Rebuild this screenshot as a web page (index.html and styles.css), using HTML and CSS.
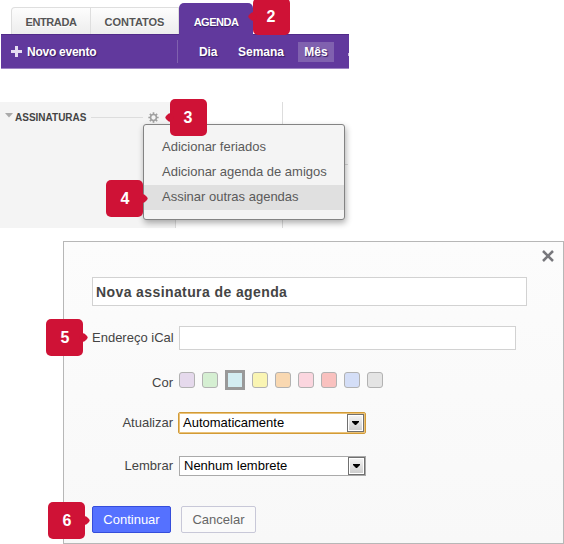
FILE: index.html
```html
<!DOCTYPE html>
<html lang="pt-BR">
<head>
<meta charset="utf-8">
<title>Agenda</title>
<link rel="stylesheet" href="styles.css">
</head>
<body>
<header class="top">
  <nav class="tabs">
    <a class="tab"><span class="t-entrada">ENTRADA</span></a>
    <a class="tab contacts"><span class="t-contatos">CONTATOS</span></a>
    <a class="tab active"><span class="t-agenda">AGENDA</span></a>
  </nav>
  <div class="bar">
    <div class="new">
      <svg width="11" height="12" viewBox="0 0 11 12"><path d="M4 0h3v4h4v3H7v4H4V7H0V4h4z" fill="#e5dcf1"/></svg>
      <span class="t-novo">Novo evento</span>
    </div>
    <div class="views"><span class="dia">Dia</span><span class="semana">Semana</span><span class="month">Mês</span><i class="cut"></i></div>
  </div>
  <b class="badge left b2">2</b>
</header>

<section class="calendar">
  <aside class="side">
    <div class="side-head">
      <svg width="8" height="5" viewBox="0 0 8 5"><path d="M0 0h8L4 4.5z" fill="#aaa"/></svg>
      <span class="t-assin">ASSINATURAS</span>
      <i class="rule"></i>
      <svg class="gear" width="11" height="11" viewBox="0 0 12 12"><circle cx="6" cy="6" r="3.2" fill="none" stroke="#a0a0a0" stroke-width="1.7"/><path d="M6 .4v2M6 9.6v2M.4 6h2M9.6 6h2M2 2l1.4 1.4M8.6 8.6L10 10M10 2L8.6 3.4M3.4 8.6L2 10" stroke="#a0a0a0" stroke-width="1.8"/></svg>
    </div>
  </aside>
  <div class="cell"></div>
  <div class="cell last"><i></i></div>
  <div class="menu">
    <div class="item"><span>Adicionar feriados</span></div>
    <div class="item"><span>Adicionar agenda de amigos</span></div>
    <div class="item selected"><span>Assinar outras agendas</span></div>
  </div>
  <b class="badge left b3">3</b>
  <b class="badge right b4">4</b>
</section>

<section class="dialog">
  <svg class="close" width="12" height="12" viewBox="0 0 12 12"><path d="M1 1l10 10M11 1L1 11" stroke="#77777c" stroke-width="2.5"/></svg>
  <div class="title"><span class="t-title">Nova assinatura de agenda</span></div>
  <div class="row ical"><label>Endereço iCal</label><div class="field"></div></div>
  <div class="row colors"><label>Cor</label>
    <div class="swatches"><i class="lilac"></i><i class="green"></i><i class="aqua"></i><i class="yellow"></i><i class="orange"></i><i class="pink"></i><i class="red"></i><i class="blue"></i><i class="gray"></i></div>
  </div>
  <div class="row update"><label>Atualizar</label>
    <div class="select focus"><span>Automaticamente</span><i class="drop"><svg width="7" height="4" viewBox="0 0 7 4"><path d="M0 0h7v1L4 4H3L0 1z"/></svg></i></div>
  </div>
  <div class="row remind"><label>Lembrar</label>
    <div class="select"><span>Nenhum lembrete</span><i class="drop"><svg width="7" height="4" viewBox="0 0 7 4"><path d="M0 0h7v1L4 4H3L0 1z"/></svg></i></div>
  </div>
  <div class="actions"><div class="button primary"><span>Continuar</span></div><div class="button"><span>Cancelar</span></div></div>
  <b class="badge right b5">5</b>
  <b class="badge right b6">6</b>
</section>
</body>
</html>
```

FILE: styles.css
```css
* { box-sizing: border-box; }
body { margin: 0; width: 564px; height: 544px; overflow: hidden; background: #fff; font: 13px/16px "Liberation Sans", Arial, sans-serif; color: #444; }
svg { display: block; flex: none; }
span, label { white-space: nowrap; }

.top { position: relative; width: 349px; height: 102px; padding: 3px 0 0 1px; }
.tabs { display: flex; align-items: flex-end; height: 31px; padding-left: 10px; }
.tab { display: flex; align-items: center; justify-content: center; width: 80px; height: 27px; padding-top: 2px; border: 1px solid #dedede; border-bottom: 0; border-radius: 4px 0 0 0; background: linear-gradient(#fdfdfd, #ededed); font-size: 11px; font-weight: bold; color: #555; text-shadow: 0 1px #fff; }
.contacts { width: 88px; border-left: 0; border-radius: 0; }
.active { position: relative; width: 74px; height: 32px; margin-bottom: -1px; padding-top: 6px; border: 0; border-radius: 5px 5px 0 0; background: #61399d; color: #fff; text-shadow: 0 1px 1px #351b62; }
.t-entrada { letter-spacing: -.4px; }
.t-agenda { letter-spacing: -.5px; }
.bar { display: flex; height: 35px; background: #61399d; border-top: 1px solid #512b89; border-bottom: 1px solid #9e84c4; color: #fff; font-weight: bold; font-size: 12px; text-shadow: 1px 1px 1px #351b62; }
.new { display: flex; align-items: center; gap: 5px; width: 176px; padding-left: 10px; }
.t-novo { letter-spacing: -.25px; }
.views { display: flex; align-items: center; flex: 1; height: 23px; margin-top: 5px; border-left: 1px solid #8061af; padding-left: 21px; }
.dia { width: 39px; letter-spacing: -.1px; }
.semana { width: 60px; }
.month { width: 36px; height: 20px; line-height: 20px; background: #8061af; text-align: center; }
.cut { width: 1px; height: 3px; margin: 6px 0 0 auto; background: #c5b5dd; }

.calendar { position: relative; display: flex; height: 126px; margin-bottom: 13px; }
.side { width: 176px; background: #f4f4f4; border-right: 1px solid #ddd; }
.side-head { display: flex; align-items: center; height: 29px; padding-left: 5px; font-size: 10px; font-weight: bold; }
.side-head svg:first-child { margin-top: -2px; }
.t-assin { width: 72px; margin: 2px 0 0 2px; }
.rule { width: 52px; height: 1px; margin: 1px 5px 0 4px; background: #ddd; }
.gear { margin-top: 2px; }
.cell { width: 107px; border-right: 1px solid #ddd; }
.last { width: 65px; border: 0; }
.last i { display: block; height: 1px; margin-top: 62px; background: #ddd; }
.menu { position: absolute; left: 143px; top: 22px; width: 202px; height: 96px; padding: 10px 0 0; border: 1px solid #838383; border-radius: 3px; background: #f4f4f4; box-shadow: 1px 3px 6px rgba(0,0,0,.32); }
.item { display: flex; align-items: center; height: 25px; padding: 0 0 1px 18px; color: #5a5a5a; }
.selected { background: #e0e0e0; }

.badge { position: absolute; z-index: 2; width: 37px; height: 37px; border-radius: 5px; background: #cf1236; color: #fff; font-size: 16px; line-height: 38px; text-align: center; }
.badge::after { content: ""; position: absolute; top: 15px; width: 7px; height: 7px; border-radius: 2px; background: #cf1236; transform: rotate(45deg); }
.left::after { left: -4px; }
.right::after { right: -4px; }
.b2 { left: 252.5px; top: -2px; }
.b3 { left: 169.5px; top: -3.5px; }
.b4 { left: 106.4px; top: 78.4px; }
.b5 { left: -17.6px; top: 77.4px; }
.b6 { left: -15.6px; top: 260.4px; }

.dialog { position: relative; width: 501px; height: 303px; margin-left: 63px; padding: 35px 36px 0 28px; border: 1px solid #b7b7b7; background: linear-gradient(#fcfcfc, #f8f8f8); }
.close { position: absolute; right: 9px; top: 8px; }
.title { display: flex; align-items: center; height: 29px; margin-bottom: 20px; padding-left: 3px; border: 1px solid #d2d2d2; background: #fff; font-size: 14px; font-weight: bold; color: #444; }
.t-title { letter-spacing: .4px; }
.row { display: flex; align-items: center; height: 24px; }
.row label { flex: none; width: 81px; margin-right: 6px; text-align: right; }
.field { width: 337px; height: 24px; border: 1px solid #d2d2d2; background: #fff; }
.colors { height: 20px; margin-top: 20px; }
.colors label { margin-top: 5px; }
.swatches { display: flex; align-items: center; gap: 7px; }
.swatches i { width: 16px; height: 16px; border: 1px solid #b2b2b2; border-radius: 3px; }
.lilac { background: #e5d9ec; } .green { background: #d5efd2; } .yellow { background: #faf5b3; }
.orange { background: #f9d8b1; } .pink { background: #fbd6df; } .red { background: #f9c1bf; }
.blue { background: #d4def7; } .gray { background: #e4e4e4; }
.swatches .aqua { width: 20px; height: 20px; border: 3px solid #999; border-radius: 0; background: #d3edf2; }
.update { height: 22px; margin-top: 22px; }
.remind { height: 20px; margin-top: 22px; }
.select { display: flex; align-items: center; justify-content: space-between; width: 187px; height: 20px; padding: 0 0 0 4px; border: 1px solid #aaa; background: #fff; color: #000; }
.focus { width: 188px; height: 22px; margin-left: -1px; padding-right: 1px; border: 1px solid #d29b36; border-radius: 2px; box-shadow: inset 0 0 0 1px #eac27a; }
.drop { display: flex; align-items: center; justify-content: center; width: 17px; height: 18px; border: 1px solid #707070; background: linear-gradient(#f4f4f4, #ccc); box-shadow: inset 0 0 0 1px #fff; }
.actions { display: flex; gap: 10px; margin-top: 30px; }
.button { display: flex; align-items: center; justify-content: center; width: 75px; height: 27px; border: 1px solid #c8c8d8; border-radius: 2px; background: #fafafa; color: #666; }
.primary { width: 79px; border-color: #354ddb; background: #5571ff; color: #fff; }
```
